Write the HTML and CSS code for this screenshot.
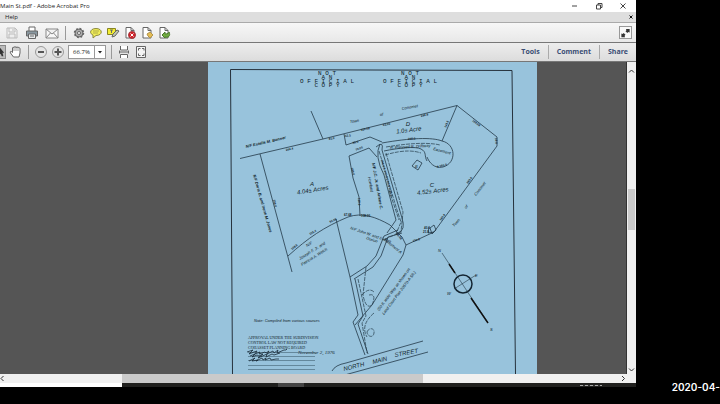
FILE: index.html
```html
<!DOCTYPE html>
<html lang="en">
<head>
<meta charset="utf-8">
<title>Main St.pdf - Adobe Acrobat Pro</title>
<link rel="stylesheet" href="styles.css">
</head>
<body>
<main class="window">
  <header class="titlebar">
    <span class="title">Main St.pdf - Adobe Acrobat Pro</span>
    <div class="controls">
      <button aria-label="Minimize"><svg width="8" height="8" viewBox="0 0 8 8"><path d="M1 4h5"/></svg></button>
      <button aria-label="Restore"><svg width="8" height="8" viewBox="0 0 8 8"><path d="M1.500 3h4v4h-4zM3 3V1.500h4v4H5.500"/></svg></button>
      <button aria-label="Close"><svg width="8" height="8" viewBox="0 0 8 8"><path d="M1.500 1.500l5 5M6.500 1.500l-5 5"/></svg></button>
    </div>
  </header>
  <nav class="menubar">
    <button>Help</button>
    <button class="close-doc" aria-label="Close document"><svg width="6" height="6" viewBox="0 0 6 6"><path d="M1.500 1.500l3 3M4.500 1.500l-3 3"/></svg></button>
  </nav>
  <div class="toolbar">
    <button aria-label="Save" class="faded"><svg width="14" height="14" viewBox="0 0 14 14"><path d="M2 2h8l2 2v8H2zM4 2v4h6V2M4 12V8h6v4M8 3v2"/></svg></button>
    <button aria-label="Print"><svg width="14" height="14" viewBox="0 0 14 14"><path d="M4 5V1h6v4" fill="#fff"/><path d="M1.500 5h11v5h-11z" fill="#8998a1"/><path d="M3.500 8h7v4.500h-7z" fill="#e5e9eb"/><path d="M5 10h4"/></svg></button>
    <button aria-label="Email"><svg width="14" height="14" viewBox="0 0 14 14"><path d="M1 3h12v9H1zM1 3l6 5 6-5M1 12l4.500-5M13 12L8.500 7" fill="#f7f7f7" stroke="#888"/></svg></button>
    <i class="divider"></i>
    <button aria-label="Settings"><svg width="14" height="14" viewBox="0 0 14 14"><circle cx="7" cy="7" r="4" fill="#aaa" stroke="#666"/><circle cx="7" cy="7" r="4.500" fill="none" stroke-width="1.500" stroke-dasharray="1.800 1.730"/><circle cx="7" cy="7" r="1.500" fill="#fff"/></svg></button>
    <button aria-label="Comment"><svg width="14" height="14" viewBox="0 0 14 14"><path d="M7 2.500c7 0 7 7 0 7L4 12V9C0 7.500 1 2.500 7 2.500z" fill="#efec58" stroke="#8b893f"/><path d="M4 5h6M4 7h5" stroke="#b1ad48"/></svg></button>
    <button aria-label="Highlight text"><svg width="14" height="14" viewBox="0 0 14 14"><path d="M1.500 2.500h8v6h-8z" fill="#f3ed33" stroke="#888522"/><path d="M4 4h3M5.500 4v3"/><path d="M6 11l1-3 4-4 2 1-4 5z" fill="#c3c9aa"/></svg></button>
    <button aria-label="Delete page"><svg width="14" height="14" viewBox="0 0 14 14"><path d="M3 1.500h5l3 3V12H3z" fill="#fff"/><path d="M8 1.500v3h3"/><circle cx="9" cy="9" r="3.500" fill="#d32128" stroke="#a23a40"/><path d="M7.500 7.500l3 3M10.500 7.500l-3 3" stroke="#fff"/></svg></button>
    <button aria-label="Edit page"><svg width="14" height="14" viewBox="0 0 14 14"><path d="M3 1.500h5l3 3V12H3z" fill="#fff"/><path d="M8 1.500v3h3"/><path d="M7 8l3-2 3 3-3 3-2-2z" fill="#e4bd55" stroke="#b2934b"/></svg></button>
    <button aria-label="Export page"><svg width="14" height="14" viewBox="0 0 14 14"><path d="M3 1.500h5l3 3V12H3z" fill="#fff"/><path d="M8 1.500v3h3"/><path d="M5 9l3-3v2c3 0 4-1 4-2 2 4-1 6-4 5v1z" fill="#72ad42" stroke="#4b792d"/></svg></button>
    <button class="expand" aria-label="Read mode"><svg width="12" height="12" viewBox="0 0 12 12"><path d="M6.500 1.500h4v4L9 5 8 6 6 4l1-1zM1.500 10.500v-4L3 7l1-1 2 2-1 1 .5 1.500z" fill="#333" stroke="none"/></svg></button>
  </div>
  <div class="toolbar viewbar">
    <button class="select-tool" aria-label="Select"><svg width="6" height="12" viewBox="0 0 6 12"><path d="M0 1l5 6H3l1 4H2L1 8 0 9z" fill="#333" stroke="none"/></svg></button>
    <button aria-label="Hand"><svg width="14" height="14" viewBox="0 0 14 14"><path d="M4.500 12L1.500 8c-1-2 1-2 2-.5V3c0-1 1.500-1 1.500 0 0-2 2-2 2 0 0-1.500 2-1.500 2 0 0-1 2-1 2 1v4l-1 4z" fill="#fff"/><path d="M5 3v3M7 3v3M9 3v3" stroke="#999"/></svg></button>
    <i class="divider"></i>
    <button aria-label="Zoom out"><svg width="14" height="14" viewBox="0 0 14 14"><circle cx="7" cy="7" r="5.500" fill="#e5e5e5" stroke="#999"/><path d="M4 7h6" stroke="#555" stroke-width="2"/></svg></button>
    <button aria-label="Zoom in"><svg width="14" height="14" viewBox="0 0 14 14"><circle cx="7" cy="7" r="5.500" fill="#e5e5e5" stroke="#999"/><path d="M3.500 7h7M7 3.500v7" stroke="#555" stroke-width="2"/></svg></button>
    <div class="zoom"><input type="text" value="66.7%" aria-label="Zoom level"><button aria-label="Zoom presets"><svg width="6" height="4" viewBox="0 0 6 4"><path d="M1 1h4L3 3.500z" fill="#222" stroke="none"/></svg></button></div>
    <i class="divider"></i>
    <button aria-label="Fit width"><svg width="14" height="14" viewBox="0 0 14 14"><path d="M3.500 1v4h7V1M3.500 13V9.500h7V13" fill="#fff"/><path d="M2 7h10M2.500 5.500v3M11.500 5.500v3"/></svg></button>
    <button aria-label="Fit page"><svg width="14" height="14" viewBox="0 0 14 14"><path d="M2.500 1.500h9v11h-9z" fill="#f5f5f5"/><path d="M4.500 5.500v-2h2M8 3.500h2v2M4.500 8.500v2h2M8 10.500h2v-2"/></svg></button>
    <div class="panels"><button>Tools</button><button>Comment</button><button>Share</button></div>
  </div>
  <section class="workspace">
    <div class="canvas">
      <svg class="page" width="329" height="312" viewBox="208 62 329 312" role="img" aria-label="Survey plan">
        <g class="frame"><path d="M230.500 69.500L512 70.500 515.500 374M230.500 69.500L232.500 374"/></g>
        <g class="stamp">
          <text x="327" y="75">N O T</text><text x="327" y="79">A N</text><text x="327" y="83">O F F I C I A L</text><text x="327" y="87">C O P Y</text>
          <text x="410" y="75">N O T</text><text x="410" y="79">A N</text><text x="410" y="83">O F F I C I A L</text><text x="410" y="87">C O P Y</text>
        </g>
        <g class="line">
          <path d="M240 158.500L323 139 457 105.500 497 137v9L434 232l-28 13M311 111l12 28M260 154l32 118M457 105.500L442 141"/>
          <path d="M344 134l2 11 24-8 12 5M349 156l20-8 8 9M349 156l4 22 6 19 1 19M288 256c20-18 36-29 60-39 14-5 28 0 42 8l12 12 4 8"/>
          <path d="M382 143c28-5 50-6 60-2 14 3 15 22 1 26-9 2-14-5-16-10"/>
          <path d="M384 151c14-3 32-5 37-2 6 3 3 7 6 12M376 147q8-7 6 3l10 34 10 34q4 12-4 15M380 144q-6 12 4 31l12 45-9 13"/>
          <path d="M336 219l14 58 17-11 9-10 8-20 14-6M406 245l-3 10-31 50-17 20M350 277l8 38-5 7 12 33M355 279l8 37-5 8 10 30M354 279l19-12 8-11 7-19 14-4"/>
          <path d="M332 371q3-6 14-8l77-22M341 376l87-24"/>
          <path d="M412 166l5-6 5 3-4 7zM430 228l4-3 2 5-4 4zM434 232l-6 1 1-6"/>
        </g>
        <g class="dash">
          <path d="M386 147c30-5 46-4 54-2M385 155c20-6 30-4 36-2M379 151l18 59 4 12-5 12M386 153l17 59-2 20-18 8M389 190l10 30M358 279l8 37-4 7 5 30M366 267l-3 28q3 15 9 10 5-12-3-10"/>
          <path d="M374 313q-14 12-7 24M367 332c2-5 8-4 7 1-1 6-7 3-7-1M362 295q7-8 12-3"/>
        </g>
        <g class="note">
          <text class="owner" transform="translate(246 148) rotate(-13)">N/F Estelle M. Bonner</text>
          <text transform="translate(350 123) rotate(-8)">Town</text><text transform="translate(380 116) rotate(-8)">of</text><text transform="translate(402 110) rotate(-10)">Conomet</text>
          <text class="owner" transform="translate(253 175) rotate(74)">N/F Doris B. and Irene M. Jones</text>
          <text transform="translate(300 260) rotate(-32)">Joseph F. Jr. and</text><text transform="translate(302 266) rotate(-32)">Patricia A. Welch</text><text transform="translate(307 247) rotate(-32)">N/F</text>
          <text transform="translate(350 229) rotate(19)">N/F John W. and Evelyn</text><text transform="translate(366 239) rotate(19)">Dorion</text>
          <text class="owner" transform="translate(372 163) rotate(80)">N/F J.C. Jr. and Arlene C.</text><text transform="translate(368 177) rotate(80)">Howland</text>
          <text transform="translate(390 149) rotate(-3)">R. Pressed R. Driftway</text><text transform="translate(433 150) rotate(15)">Easement</text>
          <text transform="translate(454 227) rotate(-48)">Town</text><text transform="translate(466 209) rotate(-48)">of</text><text transform="translate(476 196) rotate(-52)">Conomet</text>
          <text transform="translate(379 311) rotate(-53)">(50 ft. wide Way as shown on</text><text transform="translate(384 315) rotate(-53)">Land Court Plan 20570-A Sh.)</text>
          <text x="254" y="322">Note: Compiled from various sources</text>
          <text transform="translate(384 240) rotate(40)">Easement A</text>
          <text x="438" y="252">N</text><text x="475" y="277">E</text><text x="447" y="295">W</text><text x="490" y="331">S</text><text x="415" y="168">B</text>
        </g>
        <g class="tiny">
          <text transform="translate(286 151) rotate(-12)">264.4</text><text transform="translate(329 140) rotate(-12)">81.0</text><text transform="translate(345 137) rotate(-8)">32.5</text><text transform="translate(361 131) rotate(-12)">115.08</text><text transform="translate(383 126) rotate(-10)">63.00</text><text transform="translate(421 117) rotate(-12)">246.8</text><text transform="translate(408 140) rotate(-3)">200.0</text><text transform="translate(446 128) rotate(-66)">143.5</text><text transform="translate(472 121) rotate(38)">198.08</text><text transform="translate(495 138) rotate(85)">39.0</text><text transform="translate(468 184) rotate(-54)">293.6</text><text transform="translate(441 221) rotate(-53)">190.8</text><text transform="translate(413 242) rotate(-15)">110.8</text><text transform="translate(437 168) rotate(-15)">S 160.0</text><text transform="translate(273 200) rotate(75)">296.0</text><text transform="translate(351 168) rotate(75)">148.0</text><text transform="translate(358 198) rotate(87)">100.0</text><text transform="translate(292 250) rotate(-38)">108.5</text><text transform="translate(310 235) rotate(-28)">115.4</text><text transform="translate(330 223) rotate(-25)">54.08</text><text transform="translate(344 216)">67.68</text><text transform="translate(361 217)">108.00</text><text transform="translate(356 151) rotate(-22)">70.00</text><text transform="translate(353 144) rotate(-15)">85.0</text><text transform="translate(424 229)">40.0</text><text transform="translate(423 233)">21.9</text><text transform="translate(381 160) rotate(75)">104.0 S 170.8 E 68.4 R 98.0</text><text transform="translate(396 234) rotate(50)">65.08</text>
        </g>
        <g class="lot"><text x="312" y="186">A</text><text transform="translate(313 192) rotate(-9)">4.04± Acres</text><text x="408" y="126">D</text><text transform="translate(409 132) rotate(-7)">1.0± Acre</text><text x="432" y="187">C</text><text transform="translate(433 193) rotate(-7)">4.52± Acres</text></g>
        <g class="road"><text transform="translate(344 371) rotate(-14)">NORTH</text><text transform="translate(373 364) rotate(-14)">MAIN</text><text transform="translate(395 357) rotate(-11)">STREET</text></g>
        <g class="compass"><circle cx="463" cy="284" r="9"/><path class="axis" d="M442 253l46 70M454 289l22-14"/><path class="needle" d="M449 264l6 9M471 298l17 25"/></g>
        <g class="approval"><text x="248" y="339">APPROVAL UNDER THE SUBDIVISION</text><text x="248" y="344">CONTROL LAW NOT REQUIRED</text><text x="248" y="349">COHASSET PLANNING BOARD</text><text class="hand" x="298" y="354">November 2, 1976</text>
          <path class="rule" d="M248 352.500h67M248 356.500h67M248 360.500h67M248 365.500h67M248 369.500h67"/>
          <path class="ink" d="M247 352l6-2-4 4 5-2 3-1-2 3 5-2-1 2 6-2 1 1 3-2-2 3 6-3 1 2 4-3-1 3 7-3 2 0 1-1M250 356l5-2-3 3 5-2 2 1 4-2-5 4 9-4-1 3 6-3 2 1 6-2M249 361l6-3-3 3 6-1-2 1 6-3 1 2 3-2-1 2 5-2 1 2 5-1 3 0"/>
        </g>
      </svg>
    </div>
    <div class="scroll vertical"><button aria-label="Scroll up"><svg width="7" height="6" viewBox="0 0 7 6"><path d="M1 4.500L3.500 2 6 4.500"/></svg></button><div class="track"><i></i></div><button aria-label="Scroll down"><svg width="7" height="6" viewBox="0 0 7 6"><path d="M1 1.500L3.500 4 6 1.500"/></svg></button></div>
  </section>
  <div class="scroll horizontal"><button aria-label="Scroll left"><svg width="5" height="7" viewBox="0 0 5 7"><path d="M3.500 1L1 3.500 3.500 6"/></svg></button><div class="track"><i></i></div><button aria-label="Scroll right"><svg width="5" height="7" viewBox="0 0 5 7"><path d="M1 1l2.500 2.500L1 6"/></svg></button></div>
  <div class="taskbar"><i class="search"></i><i class="active"></i><i class="clock"></i></div>
</main>
<aside class="overlay"><time>2020-04-</time></aside>
</body>
</html>
```
FILE: styles.css
```css
* { box-sizing: border-box; }
body {
  margin: 0;
  height: 100vh;
  display: grid;
  grid-template-columns: minmax(0, 1fr) 84px;
  overflow: hidden;
  background: #000;
  font: 6px/10px "Open Sans", sans-serif;
  color: #222;
}
button, input { font: inherit; color: inherit; border: 0; margin: 0; padding: 0; background: none; }
button { display: flex; align-items: center; justify-content: center; flex: none; }
svg { display: block; fill: none; stroke: #666; }
.window { display: flex; flex-direction: column; padding-bottom: 17px; min-width: 0; }
.titlebar, .menubar { display: flex; align-items: center; justify-content: space-between; flex: none; }
.titlebar { height: 12px; background: #fff; }
.controls { display: flex; gap: 16px; padding-right: 9px; }
.controls svg { stroke: #444; }
.menubar { height: 11px; background: #dedede; border-bottom: 1px solid #aaa; padding: 0 2px 0 5px; }
.close-doc svg { stroke: #111; }
.toolbar {
  height: 20px;
  flex: none;
  display: flex;
  align-items: center;
  gap: 3px;
  padding: 0 5px;
  background: linear-gradient(#f7f7f7, #e8e8e8);
  border-bottom: 1px solid #777;
}
.toolbar > button { width: 14px; height: 14px; }
.toolbar:not(.viewbar) > button:nth-child(-n+3) { margin-right: 3px; }
.divider { width: 1px; height: 14px; background: #999; margin: 0 2px; }
.toolbar:not(.viewbar) .divider { margin: 0 3px 0 0; }
.faded svg { stroke: #bbb; }
.toolbar .expand { margin-left: auto; margin-right: -1px; width: 13px; height: 13px; border: 1px solid #999; background: #f8f8f8; }
.viewbar { background: linear-gradient(#ededed, #dcdcdc); padding: 0; height: 19px; }
.viewbar .select-tool { width: 6px; background: #bbb; border: 1px solid #888; border-left: 0; }
.zoom { display: flex; width: 38px; height: 14px; background: #fff; border: 1px solid #999; }
.zoom input { width: 25px; text-align: center; }
.zoom button { width: 11px; border-left: 1px solid #999; }
.panels { display: flex; margin-left: auto; font-size: 7px; font-weight: 700; color: #3a4d74; }
.panels button { padding: 0 8px; height: 14px; border-left: 1px solid #aaa; }
.panels button:first-child { border-left: 0; }
.workspace { flex: 1; min-height: 0; display: flex; }
.canvas { flex: 1; min-width: 0; display: grid; grid-template-columns: 208fr 329px 89fr; overflow: hidden; background: #555; border-right: 1px solid #333; }
.page { grid-column: 2; background: #98c3dc; }
.page text { stroke: none; fill: #0f1c27; font-family: "Liberation Sans", sans-serif; }
.frame path { stroke: #26323d; }
.line path { stroke: #233947; stroke-width: .8; }
.dash path { stroke: #233947; stroke-width: .7; stroke-dasharray: 4 1; }
.page .stamp text { font: 6px "Liberation Mono", monospace; text-anchor: middle; }
.note text { font-size: 4px; font-style: italic; }
.note .owner { font-weight: bold; }
.tiny text { font-size: 3px; font-weight: bold; }
.lot text { font-size: 6px; font-style: italic; text-anchor: middle; }
.road text { font-size: 6px; font-style: italic; }
.compass circle { stroke: #142532; stroke-width: 1.500; }
.compass .axis { stroke: #233947; stroke-width: .6; }
.compass .needle { stroke: #111; stroke-width: 1.500; }
.page .approval text { font: 4px "Liberation Serif", serif; }
.page .approval .hand { font-style: italic; font-size: 5px; }
.approval .rule { stroke: #426071; stroke-width: .6; }
.approval .ink { stroke: #192b39; stroke-width: .8; }
.scroll { display: flex; flex: none; background: #f0f0f0; }
.scroll svg { stroke: #333; }
.scroll .track { flex: 1; display: flex; }
.scroll i { background: #cacaca; }
.vertical { width: 9px; flex-direction: column; padding: 6px 0 1px; }
.vertical .track { flex-direction: column; padding: 0 1px; }
.vertical .track::before { content: ""; flex: 115; }
.vertical .track i { flex: 41; }
.vertical .track::after { content: ""; flex: 137; }
.horizontal { height: 9px; padding-right: 10px; }
.horizontal .track::before { content: ""; flex: 117; }
.horizontal .track i { flex: 301; }
.horizontal .track::after { content: ""; flex: 198; }
.taskbar { height: 4px; flex: none; display: flex; background: #20201e; }
.search { flex: 0 0 122px; background: #fff; }
.active { flex: 0 0 26px; margin-left: 156px; background: #444; }
.clock { flex: 0 0 22px; height: 1px; margin: 2px 34px 0 auto; background: repeating-linear-gradient(90deg, #aaa 0 3px, #333 3px 5px); }
.overlay { display: flex; align-items: flex-end; justify-content: flex-end; padding-bottom: 11px; overflow: hidden; }
.overlay time { color: #fff; font: 600 10px/12px Inter, sans-serif; }
```
